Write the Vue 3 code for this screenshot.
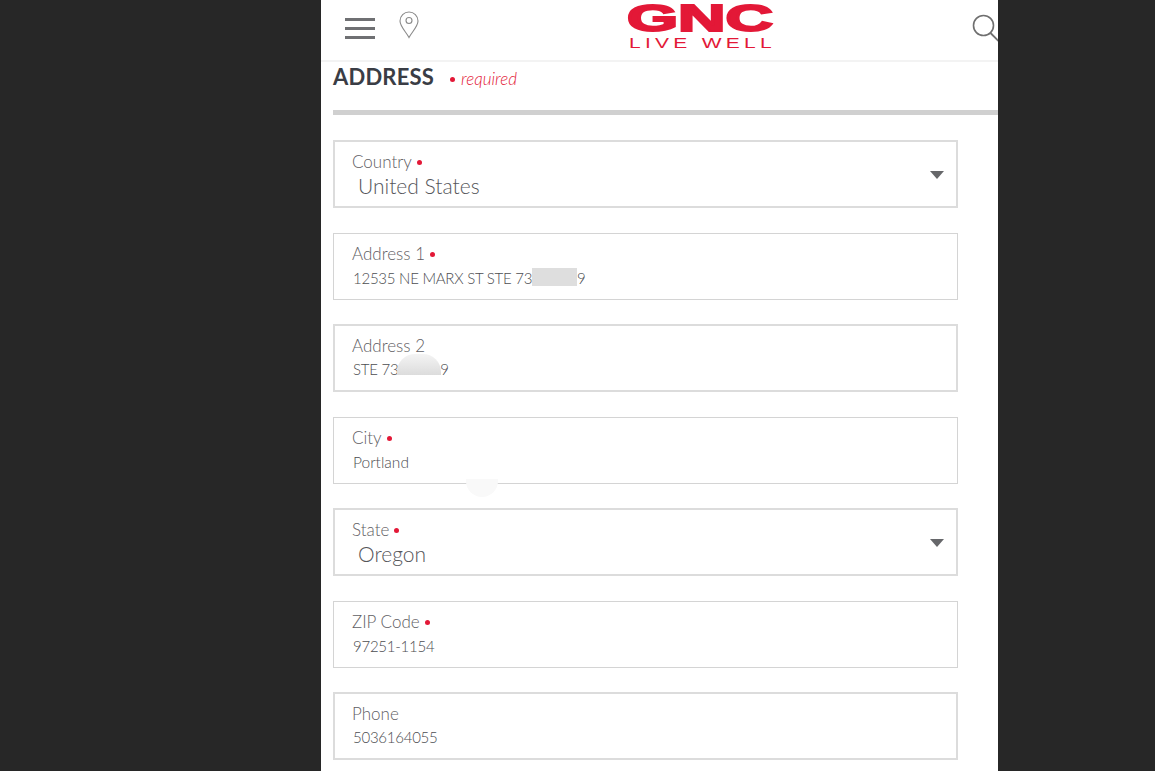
<script setup>
const fields = [
  { label: 'Country', req: true, value: 'United States', select: true },
  { label: 'Address 1', req: true, value: '12535 NE MARX ST STE 73', tail: '9', mask: 'mask-a', tight: true },
  { label: 'Address 2', value: 'STE 73', tail: '.9', mask: 'mask-b', thick: true, tight: true },
  { label: 'City', req: true, value: 'Portland', mask: 'mask-c' },
  { label: 'State', req: true, value: 'Oregon', select: true },
  { label: 'ZIP Code', req: true, value: '97251-1154', tight: true },
  { label: 'Phone', value: '5036164055', thick: true, tight: true }
]
</script>

<template>
  <div class="page">
    <main class="panel">
      <header class="topbar">
        <div class="burger"><i></i><i></i><i></i></div>
        <svg class="pin" width="22" height="28" viewBox="0 0 22 28" fill="none" stroke="#8a8a8a" stroke-width="1.1">
          <path d="M11 26.5 C8.5 21.5 2 15.5 2 10 A9 9 0 0 1 20 10 C20 15.500 13.500 21.500 11 26.500 Z" />
          <circle cx="11" cy="9.500" r="3" />
        </svg>
        <svg class="logo" width="148" height="56" viewBox="0 0 148 56">
          <text x="0" y="31" textLength="146" lengthAdjust="spacingAndGlyphs" class="logo-main">GNC</text>
          <text x="1.400" y="48" textLength="95" transform="scale(1.500 1)" class="logo-sub">LIVE WELL</text>
        </svg>
        <svg class="search" width="28" height="30" viewBox="0 0 28 30" fill="none" stroke="#6f6f6f">
          <circle cx="11.500" cy="12.500" r="10" stroke-width="1.600" />
          <path d="M18.500 20 L27 28.500" stroke-width="1.800" />
        </svg>
      </header>

      <section class="content">
        <div class="title-row">
          <h2>ADDRESS</h2>
          <span class="required"><b class="dot"></b>required</span>
        </div>
        <div class="rule"></div>

        <div class="form">
          <div v-for="f in fields" :key="f.label" class="field" :class="{ select: f.select, thick: f.thick, thin: !f.select && !f.thick }">
            <div class="label">{{ f.label }}<b v-if="f.req" class="dot"></b></div>
            <div class="value" :class="{ tight: f.tight }">{{ f.value }}<span v-if="f.tail" class="tail" :class="f.mask">{{ f.tail }}</span></div>
            <span v-if="f.mask" class="smudge" :class="f.mask"></span>
            <span v-if="f.select" class="caret"></span>
          </div>
        </div>
      </section>
    </main>
  </div>
</template>

<style>
html, body { margin: 0; background: #272727; }
</style>

<style scoped>
.page {
  height: 771px;
  overflow: hidden;
  background: #272727;
  font-family: Lato, "Open Sans", sans-serif;
}
.panel {
  box-sizing: border-box;
  width: 677px;
  height: 771px;
  margin-left: 321px;
  background: #fff;
  overflow: hidden;
}
.topbar {
  box-sizing: border-box;
  position: relative;
  height: 62px;
  border-bottom: 2px solid #f3f3f3;
  display: flex;
  align-items: flex-start;
}
.topbar > * { flex: none; }
.burger {
  width: 30px;
  margin: 18px 0 0 24px;
  display: flex;
  flex-direction: column;
  gap: 6px;
}
.burger i {
  display: block;
  height: 3px;
  background: #6f7073;
}
.pin { margin: 11px 0 0 23px; }
.logo { margin: 0 0 0 207px; }
.logo-main {
  font-family: "Liberation Sans", sans-serif;
  font-weight: 700;
  font-size: 37px;
  fill: #e31837;
  stroke: #e31837;
  stroke-width: 2px;
}
.logo-sub {
  font-family: "Liberation Sans", sans-serif;
  font-size: 14px;
  fill: #e31837;
}
.search { margin: 13px 0 0 197px; }
.content { padding-left: 12px; }
.title-row {
  height: 48px;
  display: flex;
  align-items: flex-start;
}
h2 {
  margin: 1px 0 0;
  font-size: 22px;
  line-height: 28px;
  font-weight: 700;
  letter-spacing: 0.200px;
  color: #3a3d45;
}
.required {
  margin: 7px 0 0 16px;
  font-size: 17px;
  line-height: 20px;
  font-style: italic;
  font-weight: 300;
  color: #e31837;
  display: flex;
  align-items: center;
}
.dot {
  display: inline-block;
  width: 5px;
  height: 5px;
  border-radius: 50%;
  background: #e31837;
  vertical-align: middle;
}
.required .dot { margin-right: 6px; }
.rule {
  height: 5px;
  background: #d0d0d0;
}
.form {
  display: flex;
  flex-direction: column;
  gap: 24px;
  padding-top: 25px;
}
.field {
  box-sizing: border-box;
  position: relative;
  width: 625px;
  height: 68px;
  color: #6e6f72;
}
.field.thin {
  height: 67px;
  margin-top: 1px;
  padding: 9px 0 0 18px;
  border: 1px solid #d4d4d4;
}
.field.select, .field.thick {
  border: 2px solid #dcdcdc;
  padding: 9px 0 0 17px;
}
.label {
  font-size: 17px;
  line-height: 22px;
  font-weight: 300;
  color: #5f6064;
}
.label .dot { margin: 0 0 2px 5px; }
.value {
  margin-top: 3px;
  padding-left: 1px;
  font-size: 15.500px;
  line-height: 20px;
  font-weight: 300;
  color: #4c4d51;
}
.thick .value { margin-top: 2px; }
.value.tight { letter-spacing: -0.250px; font-size: 15px; }
.select .value {
  margin-top: 1px;
  padding-left: 6px;
  font-size: 21px;
  line-height: 24px;
  font-weight: 300;
  color: #55565a;
}
.tail { position: absolute; top: 34px; }
.tail.mask-a { left: 243px; }
.tail.mask-b { left: 102px; top: 33px; }
.smudge {
  position: absolute;
  display: block;
  background: #dedede;
}
.smudge.mask-a { left: 198px; top: 34px; width: 45px; height: 18px; }
.smudge.mask-b { left: 62px; top: 28px; width: 44px; height: 21px; border-radius: 18px 18px 0 0; background: linear-gradient(#f4f4f4, #dcdcdc); }
.smudge.mask-c { left: 132px; top: 61px; width: 32px; height: 18px; background: #f9f9f9; border-radius: 0 0 16px 16px; }
.caret {
  position: absolute;
  right: 12px;
  top: 29px;
  width: 0;
  height: 0;
  border-left: 7px solid transparent;
  border-right: 7px solid transparent;
  border-top: 8px solid #66676a;
}
</style>
